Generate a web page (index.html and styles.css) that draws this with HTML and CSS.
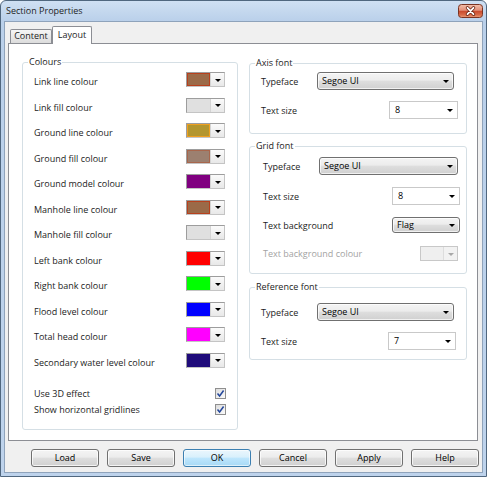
FILE: index.html
```html
<!DOCTYPE html>
<html lang="en">
<head>
<meta charset="utf-8">
<title>Section Properties</title>
<link rel="stylesheet" href="styles.css">
</head>
<body>
<div class="window">
  <div class="titlebar">
    <span class="title">Section Properties</span>
    <span class="close">
      <svg width="25" height="14" viewBox="0 0 25 14">
        <defs>
          <linearGradient id="cg" x1="0" y1="0" x2="0" y2="1">
            <stop offset="0" stop-color="#f3c0ac"/>
            <stop offset="0.45" stop-color="#e2907a"/>
            <stop offset="0.5" stop-color="#c9482c"/>
            <stop offset="0.8" stop-color="#d86a48"/>
            <stop offset="1" stop-color="#eba27f"/>
          </linearGradient>
        </defs>
        <rect x="0.5" y="0.5" width="24" height="13" rx="3" fill="url(#cg)" stroke="#7a3322"/>
        <path d="M9.5 3.8 L15.5 10.2 M15.5 3.8 L9.5 10.2" stroke="#6a2414" stroke-width="3.4" stroke-linecap="round"/>
        <path d="M9.5 3.8 L15.5 10.2 M15.5 3.8 L9.5 10.2" stroke="#ffffff" stroke-width="1.8" stroke-linecap="round"/>
      </svg>
    </span>
  </div>
  <div class="client">
    <div class="tabs">
      <div class="tab">Content</div>
      <div class="tab active">Layout</div>
    </div>
    <div class="panel">
      <fieldset class="group colours">
        <legend>Colours</legend>
        <div class="gbody">
          <div class="crow"><span class="lbl">Link line colour</span><span class="swatch"><span class="fill" style="--c:#9b6a48;--b:#b8401c"></span><span class="drop"><i class="tri"></i></span></span></div>
          <div class="crow"><span class="lbl">Link fill colour</span><span class="swatch"><span class="fill" style="--c:#e0e0e0"></span><span class="drop"><i class="tri"></i></span></span></div>
          <div class="crow"><span class="lbl">Ground line colour</span><span class="swatch"><span class="fill" style="--c:#b3962f;--b:#f0a020"></span><span class="drop"><i class="tri"></i></span></span></div>
          <div class="crow"><span class="lbl">Ground fill colour</span><span class="swatch"><span class="fill" style="--c:#9c8070;--b:#a8664c"></span><span class="drop"><i class="tri"></i></span></span></div>
          <div class="crow"><span class="lbl">Ground model colour</span><span class="swatch"><span class="fill" style="--c:#800080"></span><span class="drop"><i class="tri"></i></span></span></div>
          <div class="crow"><span class="lbl">Manhole line colour</span><span class="swatch"><span class="fill" style="--c:#9b6a48;--b:#b8401c"></span><span class="drop"><i class="tri"></i></span></span></div>
          <div class="crow"><span class="lbl">Manhole fill colour</span><span class="swatch"><span class="fill" style="--c:#e0e0e0"></span><span class="drop"><i class="tri"></i></span></span></div>
          <div class="crow"><span class="lbl">Left bank colour</span><span class="swatch"><span class="fill" style="--c:#ff0000"></span><span class="drop"><i class="tri"></i></span></span></div>
          <div class="crow"><span class="lbl">Right bank colour</span><span class="swatch"><span class="fill" style="--c:#00ff00"></span><span class="drop"><i class="tri"></i></span></span></div>
          <div class="crow"><span class="lbl">Flood level colour</span><span class="swatch"><span class="fill" style="--c:#0000ff"></span><span class="drop"><i class="tri"></i></span></span></div>
          <div class="crow"><span class="lbl">Total head colour</span><span class="swatch"><span class="fill" style="--c:#ff00ff"></span><span class="drop"><i class="tri"></i></span></span></div>
          <div class="crow"><span class="lbl">Secondary water level colour</span><span class="swatch"><span class="fill" style="--c:#1f0b7a"></span><span class="drop"><i class="tri"></i></span></span></div>
          <div class="checks">
            <div class="chrow"><span class="lbl">Use 3D effect</span><span class="check"><svg width="9" height="9" viewBox="0 0 9 9"><path d="M1.5 4.5 L3.6 7 L7.6 1.5" fill="none" stroke="#23469a" stroke-width="1.5"/></svg></span></div>
            <div class="chrow"><span class="lbl">Show horizontal gridlines</span><span class="check"><svg width="9" height="9" viewBox="0 0 9 9"><path d="M1.5 4.5 L3.6 7 L7.6 1.5" fill="none" stroke="#23469a" stroke-width="1.5"/></svg></span></div>
          </div>
        </div>
      </fieldset>

      <div class="rightcol">
        <fieldset class="group axis">
          <legend>Axis font</legend>
          <div class="gbody">
            <div class="frow"><span class="lbl">Typeface</span><span class="combo btn face">Segoe UI<i class="tri"></i></span></div>
            <div class="frow"><span class="lbl">Text size</span><span class="combo edit size">8<i class="tri"></i></span></div>
          </div>
        </fieldset>

        <fieldset class="group grid">
          <legend>Grid font</legend>
          <div class="gbody">
            <div class="frow"><span class="lbl">Typeface</span><span class="combo btn face">Segoe UI<i class="tri"></i></span></div>
            <div class="frow"><span class="lbl">Text size</span><span class="combo edit size">8<i class="tri"></i></span></div>
            <div class="frow short"><span class="lbl">Text background</span><span class="combo btn size flag">Flag<i class="tri"></i></span></div>
            <div class="frow tiny"><span class="lbl disabled">Text background colour</span><span class="swatch off"><span class="fill" style="--c:#efefef;--b:#efefef"></span><span class="drop"><i class="tri"></i></span></span></div>
          </div>
        </fieldset>

        <fieldset class="group reference">
          <legend>Reference font</legend>
          <div class="gbody">
            <div class="frow"><span class="lbl">Typeface</span><span class="combo btn face">Segoe UI<i class="tri"></i></span></div>
            <div class="frow"><span class="lbl">Text size</span><span class="combo edit size">7<i class="tri"></i></span></div>
          </div>
        </fieldset>
      </div>
    </div>

    <div class="buttons">
      <span class="button">Load</span>
      <span class="button">Save</span>
      <span class="button default">OK</span>
      <span class="button">Cancel</span>
      <span class="button">Apply</span>
      <span class="button">Help</span>
    </div>
  </div>
</div>
</body>
</html>
```
FILE: styles.css
```css
* { box-sizing: border-box; }
html, body { margin: 0; padding: 0; }
body {
  font-family: "Open Sans", "Noto Sans", sans-serif;
  font-size: 9px;
  color: #1c1c1c;
  background: #ffffff;
}

.window {
  width: 487px;
  height: 477px;
  border: 1px solid #50677f;
  border-radius: 6px 6px 0 0;
  background: linear-gradient(#cfe0f3, #bad0ea 20px, #bed3ec);
  padding: 0 3px 3px;
  display: flex;
  flex-direction: column;
}

.titlebar {
  height: 20px;
  display: flex;
  align-items: center;
  justify-content: space-between;
  padding: 0 0 0 2px;
}
.title { font-size: 9px; color: #1e1e1e; line-height: 12px; }
.close { display: flex; width: 25px; height: 14px; }

.client {
  flex: 1;
  border: 1px solid #8fa3bb;
  background: #f0f0f0;
  padding: 4px 4px 0 3px;
  display: flex;
  flex-direction: column;
}

.tabs {
  height: 18px;
  padding-left: 2px;
  display: flex;
  align-items: flex-end;
  margin-bottom: -1px;
  position: relative;
  z-index: 1;
}
.tab {
  width: 42px;
  height: 14px;
  margin-bottom: 1px;
  border: 1px solid #8c8e94;
  border-bottom: none;
  border-radius: 2px 2px 0 0;
  background: linear-gradient(#f6f6f6, #e9e9e9 50%, #dcdcdc);
  text-align: center;
  line-height: 12px;
}
.tab.active {
  width: 40px;
  height: 18px;
  margin-bottom: 0;
  background: #ffffff;
  padding-top: 1px;
  line-height: 14px;
}

.panel {
  height: 398px;
  border: 1px solid #8c8e94;
  background: #ffffff;
  padding: 12px 10px 0 13px;
  display: flex;
  gap: 11px;
  align-items: flex-start;
}

.group {
  margin: 0;
  padding: 0;
  min-width: 0;
  border: 1px solid #d5dfe5;
  border-radius: 3px;
}
.group legend {
  padding: 0 1px;
  margin-left: 5px;
  line-height: 12px;
  font-size: 9px;
  color: #1c1c1c;
}

.colours { width: 216px; }
.colours .gbody { padding: 4px 12px 12px 11px; }

.crow {
  height: 25.5px;
  display: flex;
  align-items: flex-start;
  justify-content: space-between;
}
.crow .lbl { padding-top: 2px; line-height: 15px; }

.swatch {
  width: 39px;
  height: 15px;
  display: flex;
  border: 1px solid #9d9d9d;
  border-right-color: #c4c4c4;
  border-bottom-color: #c4c4c4;
  background: #ffffff;
}
.swatch .fill {
  flex: 1;
  background: var(--c);
  border: 1px solid var(--b, var(--c));
}
.swatch .drop {
  width: 14px;
  display: flex;
  align-items: center;
  justify-content: center;
  background: linear-gradient(#fbfbfb, #e8e8e8);
  border-left: 1px solid #d4d4d4;
  padding-top: 1px;
}

.tri {
  display: block;
  width: 0;
  height: 0;
  border-left: 3px solid transparent;
  border-right: 3px solid transparent;
  border-top: 3px solid #000000;
}

.checks { margin-top: 7px; }
.chrow {
  height: 16px;
  display: flex;
  align-items: center;
  justify-content: space-between;
}
.check {
  width: 11px;
  height: 11px;
  margin-right: -1px;
  border: 1px solid #8f8f8f;
  background: linear-gradient(135deg, #dcdcdc, #fbfbfb);
  display: flex;
  align-items: center;
  justify-content: center;
}

.rightcol {
  width: 218px;
  margin-top: 1px;
  display: flex;
  flex-direction: column;
}
.grid { margin-top: 6px; }
.reference { margin-top: 7px; }

.axis .gbody { padding: 3px 8px 14px 11px; }
.grid .gbody { padding: 5px 6px 12px 13px; }
.reference .gbody { padding: 10px 10px 9px 11px; }

.frow {
  height: 18px;
  display: flex;
  align-items: center;
}
.frow .lbl { flex: 1; }
.frow.short { height: 16px; }
.frow.tiny { height: 15px; }
.axis .frow + .frow { margin-top: 11px; }
.grid .frow + .frow { margin-top: 12px; }
.grid .frow.tiny { margin-top: 13px; }
.reference .frow + .frow { margin-top: 11px; }

.lbl.disabled { color: #a3a3a3; }

.combo {
  height: 18px;
  display: flex;
  align-items: center;
  justify-content: space-between;
  padding: 0 4px 0 4px;
  line-height: 12px;
}
.combo.btn {
  border: 1px solid #707070;
  border-radius: 3px;
  background: linear-gradient(#f4f4f4, #ececec 45%, #dedede 50%, #d0d0d0);
  box-shadow: inset 0 0 0 1px rgba(255, 255, 255, 0.7);
  color: #000000;
}
.combo.edit {
  border: 1px solid #c9c9c9;
  background: #ffffff;
  padding-left: 5px;
  color: #000000;
}
.face { width: 137px; margin-right: 4px; }
.size { width: 69px; }
.grid .face { width: 139px; margin-right: 2px; }
.grid .size { width: 68px; }
.reference .face { width: 137px; margin-right: 2px; }
.reference .size { width: 68px; }
.combo.flag { height: 16px; }

.swatch.off {
  width: 38px;
  margin-right: 2px;
  border-color: #c8c8c8;
}
.swatch.off .drop { border-left-color: #dddddd; background: #f2f2f2; }
.swatch.off .tri { border-top-color: #a8a8a8; }

.buttons {
  display: flex;
  justify-content: flex-end;
  gap: 8px;
  margin-top: 8px;
  margin-right: -1px;
}
.button {
  width: 68px;
  height: 18px;
  border: 1px solid #707070;
  border-radius: 3px;
  background: linear-gradient(#f4f4f4, #ececec 45%, #dedede 50%, #d0d0d0);
  box-shadow: inset 0 0 0 1px rgba(255, 255, 255, 0.75);
  text-align: center;
  line-height: 16px;
  color: #000000;
}
.button.default {
  border-color: #3c7fb1;
  background: linear-gradient(#eaf6fd, #d9f0fc 45%, #bee6fd 50%, #a7d9f5);
  box-shadow: inset 0 0 0 1px rgba(255, 255, 255, 0.6);
}
```
